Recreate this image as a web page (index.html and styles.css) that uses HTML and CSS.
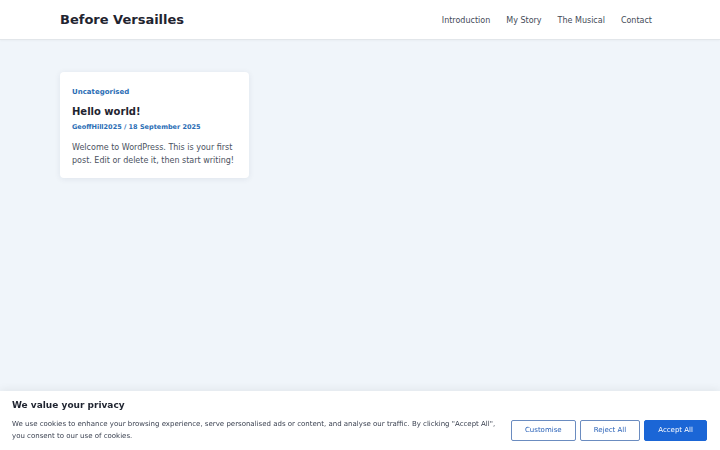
FILE: index.html
```html
<!DOCTYPE html>
<html lang="en">
<head>
    <meta charset="UTF-8">
    <meta name="viewport" content="width=device-width, initial-scale=1.0">
    <title>Before Versailles</title>
    <link rel="stylesheet" href="styles.css">
</head>
<body>

    <!-- Site header -->
    <header class="site-header">
        <div class="wrap header-inner">
            <a class="site-title" href="#">Before Versailles</a>
            <nav class="main-nav">
                <a href="#">Introduction</a>
                <a href="#">My Story</a>
                <a href="#">The Musical</a>
                <a href="#">Contact</a>
            </nav>
        </div>
    </header>

    <!-- Posts -->
    <main class="wrap posts">
        <article class="post-card">
            <a class="post-cat" href="#">Uncategorised</a>
            <h2 class="post-title">Hello world!</h2>
            <p class="post-meta">GeoffHill2025 / 18 September 2025</p>
            <p class="post-excerpt">Welcome to WordPress. This is your first post. Edit or delete it, then start writing!</p>
        </article>
    </main>

    <!-- Cookie banner -->
    <div class="cookie-bar">
        <h3>We value your privacy</h3>
        <div class="cookie-row">
            <p>We use cookies to enhance your browsing experience, serve personalised ads or content, and analyse our traffic. By clicking "Accept All", you consent to our use of cookies.</p>
            <div class="cookie-btns">
                <button class="btn btn-outline">Customise</button>
                <button class="btn btn-outline">Reject All</button>
                <button class="btn btn-fill">Accept All</button>
            </div>
        </div>
    </div>

</body>
</html>
```

FILE: styles.css
```css
body {
    margin: 0;
    padding: 0;
    height: 100vh;
    background-color: #f0f5fa;
    font-family: "DejaVu Sans", sans-serif;
    color: #1f2937;
    overflow: hidden;
}

a {
    text-decoration: none;
    color: inherit;
}

.wrap {
    width: 600px;
    margin: 0 auto;
}

/* Header */
.site-header {
    background-color: #fff;
    border-bottom: 1px solid #e2e6ea;
    box-shadow: 0 1px 2px rgba(0, 0, 0, 0.03);
}

.header-inner {
    display: flex;
    justify-content: space-between;
    align-items: center;
    height: 39px;
}

.site-title {
    font-size: 13px;
    font-weight: bold;
    color: #1f2430;
}

.main-nav {
    display: flex;
    padding-top: 2px;
}

.main-nav a {
    font-size: 8px;
    color: #434a57;
    padding: 0 8px;
}

/* Post cards */
.posts {
    padding-top: 32px;
}

.post-card {
    width: 165px;
    background-color: #fff;
    border-radius: 4px;
    padding: 16px 12px 11px;
    box-shadow: 0 1px 6px rgba(20, 40, 80, 0.08);
}

.post-cat {
    display: block;
    font-size: 7px;
    font-weight: bold;
    color: #2a6db5;
}

.post-title {
    font-size: 10px;
    margin: 10px 0 6px;
    color: #1f2430;
}

.post-meta {
    font-size: 6.5px;
    font-weight: bold;
    color: #2a6db5;
    margin: 0 0 10px;
}

.post-excerpt {
    font-size: 8px;
    line-height: 13px;
    color: #4b5260;
    margin: 0;
}

/* Cookie banner */
.cookie-bar {
    position: fixed;
    left: 0;
    right: 0;
    bottom: 0;
    background-color: #fff;
    box-shadow: 0 -2px 8px rgba(0, 0, 0, 0.06);
    padding: 9px 13px 8px 12px;
}

.cookie-bar h3 {
    font-size: 9px;
    margin: 0 0 8px;
    color: #1f2430;
}

.cookie-row {
    display: flex;
    align-items: center;
    gap: 14px;
}

.cookie-row p {
    flex: 1;
    font-size: 7px;
    line-height: 12px;
    color: #3a4150;
    margin: 0;
}

.cookie-btns {
    display: flex;
    gap: 4px;
}

.btn {
    font-family: "DejaVu Sans", sans-serif;
    font-size: 7px;
    height: 21px;
    border-radius: 2px;
    padding: 0 13px;
    cursor: pointer;
}

.btn-outline {
    background-color: #fff;
    border: 1px solid #6b8cc0;
    color: #2a62b8;
}

.btn-fill {
    background-color: #1b66d6;
    border: 1px solid #1b66d6;
    color: #fff;
}
```
